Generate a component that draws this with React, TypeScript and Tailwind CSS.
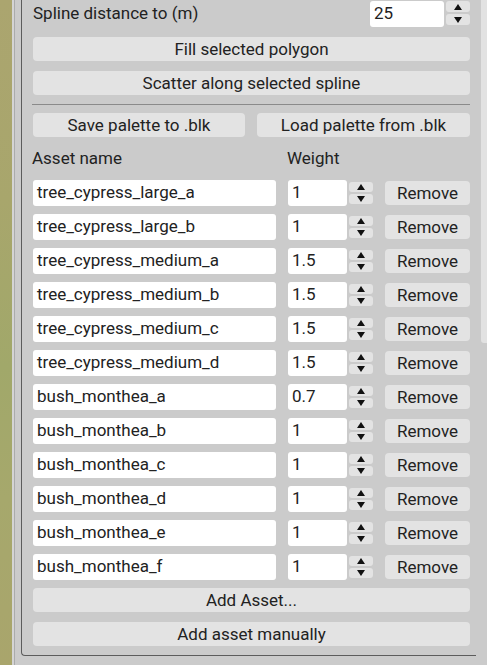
import React from "react";

const font = { fontFamily: "Roboto, 'Noto Sans', sans-serif" };

function Spinner({ h = "h-[11px]" }: { h?: string }) {
  return (
    <div className="flex flex-col gap-[2px] w-[24px]">
      <div className={`${h} rounded-[3px] bg-[#e3e3e3] flex items-center justify-center`}>
        <svg width="8" height="6" viewBox="0 0 8 6">
          <polygon points="4,0 8,6 0,6" fill="#111" />
        </svg>
      </div>
      <div className={`${h} rounded-[3px] bg-[#e3e3e3] flex items-center justify-center`}>
        <svg width="8" height="6" viewBox="0 0 8 6">
          <polygon points="0,0 8,0 4,6" fill="#111" />
        </svg>
      </div>
    </div>
  );
}

function Button({ children, className = "" }: { children: React.ReactNode; className?: string }) {
  return (
    <div
      className={`h-[24px] rounded-[4px] bg-[#e3e3e3] flex items-center justify-center text-[17px] text-[#222] leading-none ${className}`}
    >
      {children}
    </div>
  );
}

const assets: [string, string][] = [
  ["tree_cypress_large_a", "1"],
  ["tree_cypress_large_b", "1"],
  ["tree_cypress_medium_a", "1.5"],
  ["tree_cypress_medium_b", "1.5"],
  ["tree_cypress_medium_c", "1.5"],
  ["tree_cypress_medium_d", "1.5"],
  ["bush_monthea_a", "0.7"],
  ["bush_monthea_b", "1"],
  ["bush_monthea_c", "1"],
  ["bush_monthea_d", "1"],
  ["bush_monthea_e", "1"],
  ["bush_monthea_f", "1"],
];

export default function App() {
  return (
    <div className="w-[487px] h-[665px] flex overflow-hidden bg-[#cbcbcb]" style={font}>
      {/* terrain viewport peeking on the left */}
      <div className="w-[12px] h-full bg-[linear-gradient(180deg,#aba56f_0%,#a8a66c_30%,#a1a86a_55%,#a6a86c_75%,#a9a56c_100%)]" />
      <div className="w-[2px] h-full bg-[#d4d4d4]" />
      <div className="w-[1px] h-full bg-[#ababab]" />
      {/* panel */}
      <div className="w-[6px] h-full" />
      <div className="w-[455px] h-[656px] border-l border-b border-[#5c5c5c] rounded-bl-[4px] pl-[11px] pr-[6px] pt-[1px] flex flex-col">
        <div className="h-[26px] flex items-center">
          <div className="flex-1 text-[17px] text-[#222]">Spline distance to (m)</div>
          <div className="w-[74px] h-[26px] rounded-[3px] bg-white flex items-center px-[4px] text-[17px] text-[#222]">
            25
          </div>
          <div className="ml-[2px] mb-[2px]">
            <Spinner />
          </div>
        </div>
        <Button className="mt-[10px]">Fill selected polygon</Button>
        <Button className="mt-[10px]">Scatter along selected spline</Button>
        <div className="mt-[9px] h-[1px] bg-[#8a8a8a] -ml-[1px]" />
        <div className="mt-[8px] flex gap-[12px]">
          <Button className="w-[212px]">Save palette to .blk</Button>
          <Button className="flex-1">Load palette from .blk</Button>
        </div>
        <div className="mt-[13px] h-[18px] flex items-center text-[17px] text-[#222] -ml-[1px]">
          <div className="w-[255px]">Asset name</div>
          <div>Weight</div>
        </div>
        <div className="mt-[12px] flex flex-col gap-[8px]">
          {assets.map(([name, w]) => (
            <div key={name} className="h-[26px] flex items-center">
              <div className="w-[243px] h-[26px] rounded-[3px] bg-white flex items-center px-[4px] text-[17px] text-[#222]">
                {name}
              </div>
              <div className="ml-[12px] w-[59px] h-[26px] rounded-[3px] bg-white flex items-center px-[4px] text-[17px] text-[#222]">
                {w}
              </div>
              <div className="ml-[2px]">
                <Spinner h="h-[10px]" />
              </div>
              <Button className="ml-[12px] w-[85px] h-[23px]">Remove</Button>
            </div>
          ))}
        </div>
        <Button className="mt-[8px]">Add Asset...</Button>
        <Button className="mt-[10px]">Add asset manually</Button>
      </div>
      {/* scrollbar */}
      <div className="w-[5px]" />
      <div className="w-[6px] h-[343px] bg-[#e2e2e2] rounded-bl-[3px]" />
    </div>
  );
}
